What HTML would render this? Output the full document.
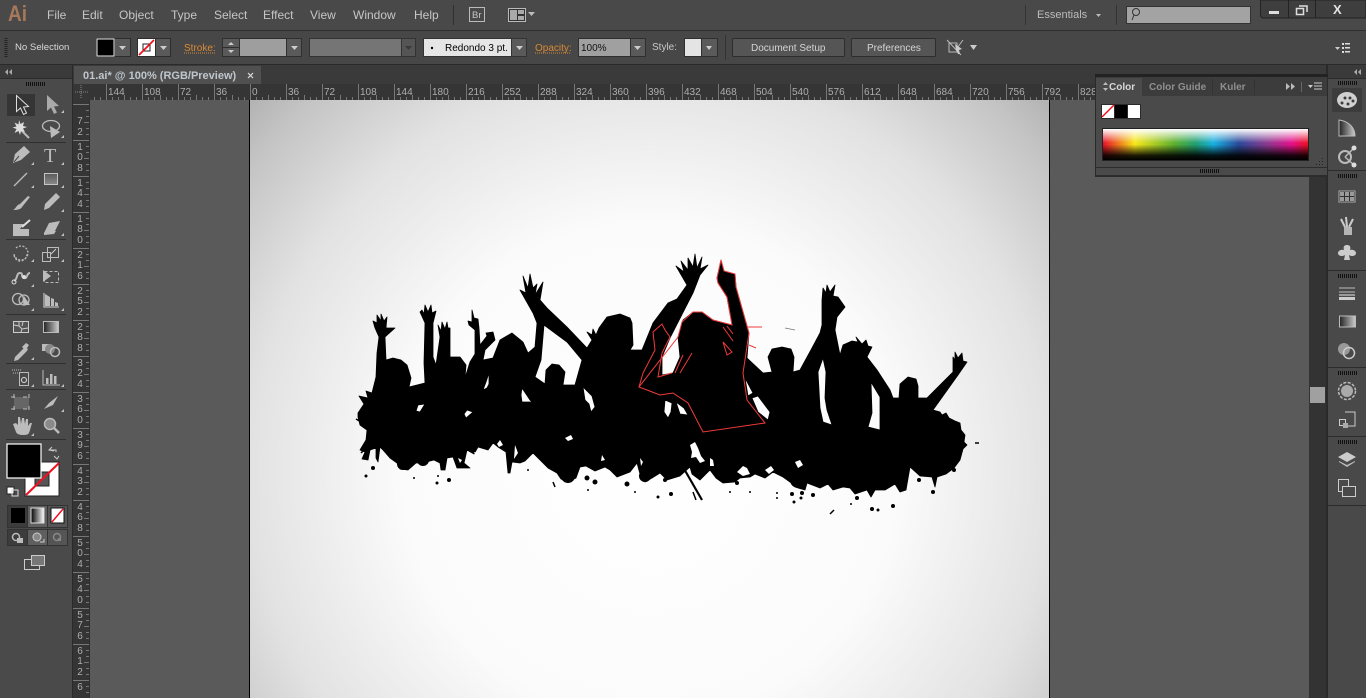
<!DOCTYPE html>
<html><head><meta charset="utf-8"><title>Illustrator</title>
<style>
html,body{margin:0;padding:0;background:#484848;overflow:hidden}
svg{display:block;font-family:"Liberation Sans",sans-serif}
.m{font-size:12px;fill:#c6c6c6}
.r{font-size:10px;fill:#aeaeae}
.v{font-size:10px;fill:#aeaeae;text-anchor:middle}
.o{font-size:10px;fill:#d98a35}
.i{fill:#bcbcbc}
.s{fill:none;stroke:#bcbcbc;stroke-width:1.3}
</style></head><body>
<svg width="1366" height="698" viewBox="0 0 1366 698" xmlns="http://www.w3.org/2000/svg">
<defs>
<radialGradient id="ab" gradientUnits="userSpaceOnUse" cx="650" cy="470" r="590">
<stop offset="0" stop-color="#fff"/><stop offset=".42" stop-color="#fbfbfb"/><stop offset=".68" stop-color="#e2e2e2"/><stop offset=".85" stop-color="#c4c4c4"/><stop offset="1" stop-color="#a0a0a0"/>
</radialGradient>
<linearGradient id="hue" x1="0" x2="1" y1="0" y2="0">
<stop offset="0" stop-color="#e8102a"/><stop offset=".07" stop-color="#f07020"/><stop offset=".155" stop-color="#f8e81a"/><stop offset=".35" stop-color="#5cb030"/><stop offset=".45" stop-color="#20a070"/><stop offset=".54" stop-color="#18b0e0"/><stop offset=".66" stop-color="#2a4a9c"/><stop offset=".8" stop-color="#8a3a90"/><stop offset=".92" stop-color="#e4108c"/><stop offset="1" stop-color="#ee1020"/>
</linearGradient>
<linearGradient id="ov" x1="0" x2="0" y1="0" y2="1">
<stop offset="0" stop-color="#fff"/><stop offset=".45" stop-color="#fff" stop-opacity="0"/><stop offset=".5" stop-color="#000" stop-opacity="0"/><stop offset=".85" stop-color="#000" stop-opacity=".88"/><stop offset="1" stop-color="#000"/>
</linearGradient>
<linearGradient id="g1" x1="0" x2="1"><stop offset="0" stop-color="#222"/><stop offset="1" stop-color="#ccc"/></linearGradient>
<linearGradient id="g2" x1="0" x2="1"><stop offset="0" stop-color="#000"/><stop offset="1" stop-color="#fff"/></linearGradient>
<linearGradient id="g3" x1="0" x2="0" y1="0" y2="1"><stop offset="0" stop-color="#5a5a5a"/><stop offset="1" stop-color="#8a8a8a"/></linearGradient>
<pattern id="hr" width="36" height="16" patternUnits="userSpaceOnUse" x="250" y="84">
<rect x="0" y="0" width="1" height="16" fill="#777"/>
<rect x="6" y="13" width="1" height="3" fill="#777"/><rect x="12" y="13" width="1" height="3" fill="#777"/><rect x="18" y="11" width="1" height="5" fill="#777"/><rect x="24" y="13" width="1" height="3" fill="#777"/><rect x="30" y="13" width="1" height="3" fill="#777"/>
</pattern>
<pattern id="vr" width="16" height="36" patternUnits="userSpaceOnUse" x="73" y="104">
<rect y="0" x="0" height="1" width="16" fill="#777"/>
<rect y="6" x="13" height="1" width="3" fill="#777"/><rect y="12" x="13" height="1" width="3" fill="#777"/><rect y="18" x="11" height="1" width="5" fill="#777"/><rect y="24" x="13" height="1" width="3" fill="#777"/><rect y="30" x="13" height="1" width="3" fill="#777"/>
</pattern>
<pattern id="grip" width="2" height="6" patternUnits="userSpaceOnUse"><rect width="1" height="6" fill="#111"/></pattern>
</defs>

<!-- base -->
<rect width="1366" height="698" fill="#484848"/>
<rect x="0" y="0" width="1366" height="30" fill="#494949"/>
<rect x="0" y="30" width="1366" height="1" fill="#2e2e2e"/>
<rect x="0" y="31" width="1366" height="33" fill="#474747"/>
<rect x="0" y="64" width="1366" height="1" fill="#2a2a2a"/>

<!-- menu -->
<text x="8" y="21" font-size="22" font-weight="bold" fill="#a8785a" textLength="19" lengthAdjust="spacingAndGlyphs">Ai</text>
<text class="m" x="47" y="19">File</text><text class="m" x="82" y="19">Edit</text><text class="m" x="119" y="19">Object</text><text class="m" x="171" y="19">Type</text><text class="m" x="214" y="19">Select</text><text class="m" x="263" y="19">Effect</text><text class="m" x="310" y="19">View</text><text class="m" x="353" y="19">Window</text><text class="m" x="414" y="19">Help</text>
<rect x="453" y="5" width="1" height="20" fill="#303030"/>
<rect x="469.500" y="7.500" width="15" height="14" fill="none" stroke="#bbb"/>
<text x="472" y="18" font-size="9.500" fill="#c8c8c8">Br</text>
<rect x="508.500" y="8.500" width="17" height="13" fill="#333" stroke="#bbb"/><rect x="510" y="10" width="7" height="10" fill="#aaa"/><rect x="518" y="10" width="6" height="4" fill="#aaa"/><rect x="518" y="16" width="6" height="4" fill="#aaa"/>
<path d="M528 12h7l-3.500 4z" fill="#bbb"/>
<rect x="1025" y="5" width="1" height="20" fill="#333"/>
<text x="1037" y="18" font-size="11" fill="#bcbcbc">Essentials</text>
<path d="M1096 14h5l-2.500 3z" fill="#bbb"/>
<rect x="1116" y="5" width="1" height="20" fill="#333"/>
<rect x="1126.500" y="6.500" width="124" height="17" fill="#a3a3a3" stroke="#333"/>
<circle cx="1136" cy="12" r="3.500" fill="none" stroke="#333"/><path d="M1134 15l-2 5" stroke="#333" fill="none"/>
<!-- window buttons -->
<path d="M1260.500 0v15a3 3 0 0 0 3 3h102.500V0z" fill="#3e3e3e" stroke="#222"/>
<rect x="1288" y="0" width="1" height="18" fill="#222"/><rect x="1315" y="0" width="1" height="18" fill="#222"/>
<rect x="1269" y="11" width="10" height="3" fill="#ddd"/>
<rect x="1296.500" y="8.500" width="7" height="6" fill="none" stroke="#ddd" stroke-width="1.500"/><path d="M1299 6h8v6" fill="none" stroke="#ddd" stroke-width="1.500"/>
<text x="1333" y="14" font-size="13" font-weight="bold" fill="#e2e2e2">X</text>

<!-- control bar -->
<path d="M6 38v20" stroke="#222" stroke-width="3" stroke-dasharray="1 1" fill="none"/>
<text x="15" y="50" font-size="9.600" fill="#d8d8d8">No Selection</text>
<rect x="96" y="38" width="35" height="19" fill="#2d2d2d"/>
<rect x="97" y="39" width="17" height="17" fill="#000" stroke="#eee"/>
<rect x="115" y="39" width="15" height="17" fill="#5a5a5a"/><path d="M119 46h7l-3.500 4z" fill="#ccc"/>
<rect x="137" y="38" width="34" height="19" fill="#2d2d2d"/>
<rect x="138" y="39" width="17" height="17" fill="#fff"/><rect x="143" y="44" width="7" height="7" fill="none" stroke="#222"/><path d="M139 55L154 40" stroke="#f01020" stroke-width="1.800"/>
<rect x="156" y="39" width="14" height="17" fill="#5a5a5a"/><path d="M160 46h7l-3.500 4z" fill="#ccc"/>
<text class="o" x="184" y="51">Stroke:</text><path d="M184 53h31" stroke="#d98a35" stroke-dasharray="1 1"/>
<rect x="222" y="38" width="80" height="19" fill="#2f2f2f"/>
<rect x="223" y="39" width="16" height="8" fill="#5a5a5a"/><rect x="223" y="48" width="16" height="8" fill="#5a5a5a"/>
<path d="M228 45l3-3 3 3zM228 50l3 3 3-3z" fill="#ccc"/>
<rect x="240" y="39" width="46" height="17" fill="#9e9e9e"/>
<rect x="287" y="39" width="14" height="17" fill="#5a5a5a"/><path d="M291 46h7l-3.500 4z" fill="#ccc"/>
<rect x="309" y="38" width="107" height="19" fill="#333"/>
<rect x="310" y="39" width="91" height="17" fill="#757575"/><rect x="402" y="39" width="13" height="17" fill="#555"/><path d="M405 46h7l-3.500 4z" fill="#3a3a3a"/>
<rect x="423" y="38" width="104" height="19" fill="#333"/>
<rect x="424" y="39" width="87" height="17" fill="#e6e6e6"/>
<circle cx="432" cy="48" r="1.200" fill="#000"/>
<text x="445" y="51" font-size="10" fill="#000">Redondo 3 pt.</text>
<rect x="512" y="39" width="14" height="17" fill="#5a5a5a"/><path d="M516 46h7l-3.500 4z" fill="#ccc"/>
<text class="o" x="535" y="51">Opacity:</text><path d="M535 53h36" stroke="#d98a35" stroke-dasharray="1 1"/>
<rect x="578" y="38" width="68" height="19" fill="#2f2f2f"/>
<rect x="579" y="39" width="51" height="17" fill="#a0a0a0"/><text x="581" y="51" font-size="10" fill="#111">100%</text>
<rect x="631" y="39" width="14" height="17" fill="#5a5a5a"/><path d="M634 46h7l-3.500 4z" fill="#ccc"/>
<text x="652" y="50" font-size="10" fill="#c8c8c8">Style:</text>
<rect x="684" y="38" width="34" height="19" fill="#2f2f2f"/>
<rect x="685" y="39" width="16" height="17" fill="#e4e4e4"/><rect x="702" y="39" width="15" height="17" fill="#5a5a5a"/><path d="M706 46h6l-3 4z" fill="#ccc"/>
<rect x="725" y="35" width="1" height="25" fill="#333"/>
<rect x="732.500" y="38.500" width="112" height="18" rx="1" fill="#555" stroke="#2d2d2d"/>
<text x="751" y="51" font-size="10" fill="#d4d4d4">Document Setup</text>
<rect x="851.500" y="38.500" width="84" height="18" rx="1" fill="#555" stroke="#2d2d2d"/>
<text x="867" y="51" font-size="10" fill="#d4d4d4">Preferences</text>
<rect x="949" y="43" width="8" height="9" fill="none" stroke="#bbb"/><path d="M947 40l14 15M963 40l-6 8" stroke="#bbb" fill="none"/><path d="M955 44l7 5-3 1 1 4-2 0-2-4z" fill="#ccc"/>
<path d="M970 45h7l-3.500 5z" fill="#ccc"/>
<path d="M1335 47h5l-2.500 3z" fill="#ccc"/><path d="M1342 43h2v2h-2zM1345 43h5v1.500h-5zM1342 47h2v2h-2zM1345 47h5v1.500h-5zM1342 51h2v2h-2zM1345 51h5v1.500h-5z" fill="#ddd"/>

<!-- doc area -->
<rect x="73" y="65" width="1255" height="19" fill="#3a3a3a"/>
<rect x="74" y="66" width="187" height="18" fill="#505050"/>
<text x="83" y="79" font-size="11" font-weight="bold" fill="#bfc6cc">01.ai* @ 100% (RGB/Preview)</text>
<path d="M248 73l5 5M253 73l-5 5" stroke="#ddd" stroke-width="1.200"/>
<rect x="89" y="100" width="1221" height="598" fill="#5a5a5a"/>
<!-- ruler h -->
<rect x="73" y="84" width="1254" height="16" fill="#353535"/>
<rect x="90" y="84" width="1005" height="16" fill="url(#hr)"/>
<rect x="73" y="84" width="16" height="16" fill="#363636"/>
<path d="M75 92h14M81 85v14" stroke="#888" stroke-dasharray="1 1" fill="none"/>
<g><text class="r" x="108" y="95">144</text><text class="r" x="144" y="95">108</text><text class="r" x="180" y="95">72</text><text class="r" x="216" y="95">36</text><text class="r" x="252" y="95">0</text><text class="r" x="288" y="95">36</text><text class="r" x="324" y="95">72</text><text class="r" x="360" y="95">108</text><text class="r" x="396" y="95">144</text><text class="r" x="432" y="95">180</text><text class="r" x="468" y="95">216</text><text class="r" x="504" y="95">252</text><text class="r" x="540" y="95">288</text><text class="r" x="576" y="95">324</text><text class="r" x="612" y="95">360</text><text class="r" x="648" y="95">396</text><text class="r" x="684" y="95">432</text><text class="r" x="720" y="95">468</text><text class="r" x="756" y="95">504</text><text class="r" x="792" y="95">540</text><text class="r" x="828" y="95">576</text><text class="r" x="864" y="95">612</text><text class="r" x="900" y="95">648</text><text class="r" x="936" y="95">684</text><text class="r" x="972" y="95">720</text><text class="r" x="1008" y="95">756</text><text class="r" x="1044" y="95">792</text><text class="r" x="1080" y="95">828</text></g>
<!-- ruler v -->
<rect x="73" y="100" width="16" height="598" fill="#353535"/>
<rect x="73" y="104" width="16" height="594" fill="url(#vr)"/>
<rect x="89" y="100" width="1" height="598" fill="#2e2e2e"/>
<g>
<text class="v" x="80" y="124">7</text><text class="v" x="80" y="135">2</text>
<text class="v" x="80" y="150">1</text><text class="v" x="80" y="160">0</text><text class="v" x="80" y="171">8</text>
<text class="v" x="80" y="186">1</text><text class="v" x="80" y="196">4</text><text class="v" x="80" y="207">4</text>
<text class="v" x="80" y="222">1</text><text class="v" x="80" y="232">8</text><text class="v" x="80" y="243">0</text>
<text class="v" x="80" y="258">2</text><text class="v" x="80" y="268">1</text><text class="v" x="80" y="279">6</text>
<text class="v" x="80" y="294">2</text><text class="v" x="80" y="304">5</text><text class="v" x="80" y="315">2</text>
<text class="v" x="80" y="330">2</text><text class="v" x="80" y="340">8</text><text class="v" x="80" y="351">8</text>
<text class="v" x="80" y="366">3</text><text class="v" x="80" y="376">2</text><text class="v" x="80" y="387">4</text>
<text class="v" x="80" y="402">3</text><text class="v" x="80" y="412">6</text><text class="v" x="80" y="423">0</text>
<text class="v" x="80" y="438">3</text><text class="v" x="80" y="448">9</text><text class="v" x="80" y="459">6</text>
<text class="v" x="80" y="474">4</text><text class="v" x="80" y="484">3</text><text class="v" x="80" y="495">2</text>
<text class="v" x="80" y="510">4</text><text class="v" x="80" y="520">6</text><text class="v" x="80" y="531">8</text>
<text class="v" x="80" y="546">5</text><text class="v" x="80" y="556">0</text><text class="v" x="80" y="567">4</text>
<text class="v" x="80" y="582">5</text><text class="v" x="80" y="592">4</text><text class="v" x="80" y="603">0</text>
<text class="v" x="80" y="618">5</text><text class="v" x="80" y="628">7</text><text class="v" x="80" y="639">6</text>
<text class="v" x="80" y="654">6</text><text class="v" x="80" y="664">1</text><text class="v" x="80" y="675">2</text>
<text class="v" x="80" y="690">6</text>
</g>
<!-- artboard -->
<rect x="250" y="100" width="799" height="598" fill="url(#ab)"/>
<rect x="249" y="100" width="1" height="598" fill="#000"/><rect x="1049" y="100" width="1" height="598" fill="#000"/>

<!-- silhouette -->
<path fill="#000" stroke="#000" stroke-width=".8" stroke-linejoin="round" fill-rule="evenodd" d="M358 413L364 404 359 396 368 398 366 391 372 393 376 377 377 353 379 337 375 328 373 321 377 323 377 315 381 321 381 314 384 321 387 317 386 328 395 328 385 337 386 360 393 358 401 360 407 365 411 378 409 387 425 383 424 363 425 323 420 312 422 310 424 314 425 305 428 312 431 305 432 313 436 311 433 323 433 357 436 365 440 337 438 325 441 331 442 322 445 329 447 322 448 328 450 328 450 357 460 357 466 365 465 378 470 362 475 354 475 330 469 325 468 321 472 322 472 310 474 318 478 319 479 328 480 345 487 336 486 333 493 332 495 340 485 350 483 360 493 358 500 340 512 333 523 342 528 353 535 347 537 323 533 313 520 290 526 293 523 276 528 288 530 274 533 288 537 284 535 295 543 282 540 300 547 308 567 327 587 348 592 340 587 332 592 335 593 329 596 335 599 328 607 317 620 314 630 318 632 323 633 345 630 350 642 350 653 323 668 303 677 299 687 285 676 266 684 272 681 261 688 270 688 258 693 267 695 254 697 268 702 257 700 269 708 265 700 275 693 293 670 338 662 357 662 375 673 373 680 357 678 337 683 320 693 312 702 312 713 320 732 325 727 297 718 283 717 278 721 260 724 271 735 274 736 287 749 333 747 358 763 373 772 372 768 357 772 349 782 347 791 349 794 357 793 372 800 370 812 348 820 333 822 325 822 300 823 288 826 293 827 285 830 292 835 285 833 296 838 297 845 307 837 317 835 330 840 355 843 345 852 341 858 342 856 337 862 344 866 340 868 346 872 347 867 357 877 370 890 390 893 398 899 398 900 384 908 377 916 379 918 386 918 398 927 398 953 372 953 357 955 360 955 352 958 358 962 353 963 361 967 362 958 375 933 410 940 412 942 415 946 413 949 418 955 421 960 423 961 430 965 435 964 442 967 445 963 449 960 460 954 468 946 474 937 477 935 487 932 477 920 476 910 467 906 490 900 492 895 484 885 490 875 490 871 497 867 490 855 494 850 488 843 487 833 490 828 484 820 488 807 483 805 490 798 488 790 482 783 477 773 472 765 478 755 474 750 477 740 478 735 482 723 483 716 478 710 470 704 476 700 480 692 474 690 467 680 476 667 480 660 473 652 478 645 482 640 474 637 463 630 472 617 477 610 470 605 467 595 471 586 466 580 467 576 478 568 482 561 479 557 473 548 468 540 460 533 453 525 461 520 463 512 462 510 473 508 473 506 452 498 447 493 443 488 450 478 447 474 454 467 450 464 463 470 468 457 468 453 457 447 458 445 470 441 470 440 463 434 460 430 461 423 463 416 463 408 470 400 469 397 463 390 458 383 450 380 447 378 462 376 458 376 448 370 450 368 460 362 459 365 452 360 450 366 440 367 430 360 425 358 417Z
M544 325L567 342 582 360 575 385 563 385 565 372 559 365 552 364 546 370 545 384 535 377 541 360Z
M489 373L486 382 483 390 487 388 489 384Z
M522 388L530 400 532 402 522 402 521 395Z
M583 387L592 396 595 407 591 412 589 404 585 400Z
M745 378L753 393 748 396Z
M752 398L758 396 770 412 768 420 758 412Z
M823 358L826 372 825 398 827 410 832 425 823 422 820 408 818 372Z
M871 382L880 397 880 430 868 427 872 413Z
M418 405L425 404 420 412 416 411Z
M467 410L473 412 466 418 464 414Z
M665 400L672 403 671 412 668 418 664 412Z
M676 402L684 408 688 415 680 414Z
"/>
<!-- white specks in splatter -->
<path fill="#fff" d="M690 445l5-3 3 6 3 8 4 5-5 2-4-6-5 1 1-6zM737 472l6-6 4 2 3 6-7 2zM765 470l6-4 3 4-5 4zM795 462l5-2 3 5-5 3zM710 458l3 2 1 6-4 0zM565 438l6-3 2 4-5 2zM500 440l3 5-4 2-2-3zM474 452l5 1-2 5zM515 445l3 8-4 6zM458 458l4 2-2 3zM602 455l3 5-4 1zM640 458l3 4-2 4z"/>
<!-- streaks & dots -->
<path d="M683 467L702 500" stroke="#000" stroke-width="2.200"/><path d="M693 492l3 8M553 482l2 5M363 423l-7-4M369 445l-8 8M830 514l4-4M975 443h4M510 463l-1 10" stroke="#000" stroke-width="1.500"/>
<g fill="#000"><circle cx="366" cy="476" r="1.500"/><circle cx="373" cy="468" r="2"/><circle cx="414" cy="478" r="1"/><circle cx="437" cy="483" r="1.500"/><circle cx="438" cy="476" r="1"/><circle cx="449" cy="480" r="2"/><circle cx="403" cy="464" r="6"/><circle cx="423" cy="460" r="6"/><circle cx="528" cy="470" r="1"/><circle cx="587" cy="478" r="2.500"/><circle cx="595" cy="482" r="2.500"/><circle cx="588" cy="490" r="1"/><circle cx="627" cy="484" r="2.500"/><circle cx="635" cy="492" r="1"/><circle cx="658" cy="497" r="1.500"/><circle cx="665" cy="480" r="2"/><circle cx="671" cy="494" r="2"/><circle cx="737" cy="483" r="2"/><circle cx="730" cy="492" r="1"/><circle cx="750" cy="492" r="1"/><circle cx="777" cy="493" r="1"/><circle cx="777" cy="498" r="1"/><circle cx="792" cy="494" r="2"/><circle cx="802" cy="493" r="2"/><circle cx="801" cy="498" r="1.500"/><circle cx="813" cy="495" r="2"/><circle cx="794" cy="502" r="1.500"/><circle cx="798" cy="480" r="8"/><circle cx="783" cy="468" r="8"/><circle cx="857" cy="498" r="2"/><circle cx="872" cy="509" r="2"/><circle cx="878" cy="510" r="1.500"/><circle cx="893" cy="506" r="2"/><circle cx="851" cy="504" r="1"/><circle cx="919" cy="480" r="2"/><circle cx="933" cy="492" r="2"/><circle cx="954" cy="470" r="2"/><circle cx="568" cy="476" r="7"/><circle cx="645" cy="476" r="6"/></g>
<!-- red outline -->
<path fill="none" stroke="#f23a3a" stroke-width="1" d="M639 387L643 373 655 350 653 332 662 324 665 330 670 337 662 353 658 377 672 373 M678 337L682 322 693 312 702 312 713 320 732 325 727 297 718 283 717 278 721 260 724 271 735 274 736 287 749 333 743 373 747 400 765 423 703 432 688 403 673 393 660 395 647 390 639 387Z"/>
<path fill="none" stroke="#f23a3a" stroke-width="1" d="M747 327h15M749 345l7 3M723 342l9 10-5 3zM723 327l10 14M727 326l6 8M683 355l-8 18M692 353l-12 20"/>
<path d="M785 328l10 2" stroke="#777" stroke-width=".8"/>

<!-- scrollbar -->
<rect x="1309" y="100" width="18" height="598" fill="#333"/>
<rect x="1310" y="387" width="15" height="16" fill="#a0a0a0"/>
<rect x="1326" y="65" width="2" height="633" fill="#2a2a2a"/>

<!-- left panel -->
<rect x="0" y="65" width="72" height="14" fill="#3a3a3a"/>
<rect x="72" y="65" width="1" height="633" fill="#2a2a2a"/>
<path d="M8 69l-3 3 3 3zM12 69l-3 3 3 3z" fill="#aaa"/>
<rect x="0" y="78" width="72" height="620" fill="#4a4a4a"/>
<rect x="0" y="78" width="72" height="1" fill="#2c2c2c"/>
<rect x="25" y="82" width="20" height="4" fill="url(#grip)"/>
<rect x="7" y="94" width="28" height="22" fill="#353535"/>
<!-- separators -->
<g fill="#303030"><rect x="6" y="142" width="60" height="1"/><rect x="6" y="239" width="60" height="1"/><rect x="6" y="314" width="60" height="1"/><rect x="6" y="363" width="60" height="1"/><rect x="6" y="389" width="60" height="1"/><rect x="6" y="439" width="60" height="1"/></g>
<!-- corner marks -->
<path d="M64 113l-3 0 3-3zM64 138l-3 0 3-3zM34 165l-3 0 3-3zM64 165l-3 0 3-3zM34 188l-3 0 3-3zM64 188l-3 0 3-3zM64 212l-3 0 3-3zM64 236l-3 0 3-3zM34 262l-3 0 3-3zM64 262l-3 0 3-3zM34 287l-3 0 3-3zM34 311l-3 0 3-3zM64 311l-3 0 3-3zM34 360l-3 0 3-3zM34 387l-3 0 3-3zM64 387l-3 0 3-3zM64 412l-3 0 3-3zM34 436l-3 0 3-3z" fill="#c0c0c0"/>
<!-- row 1 -->
<path d="M16.500 95.500v16l4-3.500 3 6.500 3-1.500-3-6 5-.5z" fill="#333" stroke="#ddd"/>
<path d="M47 95v16l4-3.500 3 6.500 3-1.500-3-6 5-.5z" fill="#aaa"/>
<!-- wand / lasso -->
<path d="M21 130l8 8" stroke="#bbb" stroke-width="2"/><path d="M19 120l1.500 4 3.500-2-1 4 4 1-4 1.500 2 3.500-4-1-1 4-1.500-4-4 2 2-4-4-1.500 4-1-2-4 4 2z" fill="#ddd"/>
<ellipse cx="51" cy="126" rx="8.500" ry="5.500" class="s"/><path d="M50 126l1 12 9-6z" fill="#bbb"/>
<!-- pen / T -->
<path d="M13 163l2-9 9-8 6 6-9 8z" class="i"/><path d="M14 162l5-6" stroke="#444"/>
<text x="44" y="162" font-family="Liberation Serif,serif" font-size="20" fill="#bcbcbc">T</text>
<!-- line / rect -->
<path d="M14 186L27 173" stroke="#bbb" stroke-width="1.300"/>
<rect x="44.500" y="173.500" width="13" height="11" fill="url(#g3)" stroke="#c4c4c4"/>
<!-- brush / pencil -->
<path d="M28 196l2 1-8 10c-1 2-4 3-9 3 3-1 3-5 7-6z" class="i"/>
<path d="M44 210l1-6 11-11 4 4-11 11z" class="i"/>
<!-- blob / eraser -->
<path d="M13 224h11l-4 5h9v7H13z" class="i"/><path d="M22 227l8-7" stroke="#ddd" stroke-width="2"/>
<path d="M44 233l5-10 11-2-5 10 1 0-2 3-10 1z" class="i"/>
<!-- rotate / scale -->
<path d="M16 248a7 7 0 1 1-2 6a7 7 0 0 0 5 7a7 7 0 0 0 8-7" fill="none" stroke="#bbb" stroke-dasharray="2 1.500" stroke-width="1.300"/>
<rect x="42.500" y="252.500" width="8" height="9" fill="none" stroke="#bbb"/><rect x="47.500" y="247.500" width="11" height="10" fill="none" stroke="#bbb"/><path d="M51 254l5-5" stroke="#ccc"/>
<!-- warp / free transform -->
<path d="M14 281c4-2 2-8 6-8s0 4 4 5 2-5 6-5" fill="none" stroke="#bbb" stroke-width="2"/><circle cx="14" cy="282" r="2" fill="none" stroke="#ddd"/><circle cx="24" cy="277" r="2" fill="#ddd"/>
<rect x="44.500" y="271.500" width="14" height="11" fill="none" stroke="#bbb" stroke-dasharray="3 2"/><path d="M43 270l8 6-8 6z" fill="#bbb"/>
<!-- shape builder / chart -->
<circle cx="18" cy="299" r="5.500" class="s"/><circle cx="24" cy="300" r="5" class="s"/><path d="M24 296l6 9-7 0z" class="i"/>
<path d="M44 293v14h15" fill="none" stroke="#bbb" stroke-width="1.300"/><path d="M45 294l5 3v9h-5zM51 298l3 1v7h-3zM55 302l3 1v3h-3z" class="i"/>
<!-- mesh / gradient -->
<rect x="13.500" y="321.500" width="15" height="11" fill="#555" stroke="#ccc"/><path d="M14 325l5 1 3 3 6-1M19 322v4M22 329l-1 3M23 322l-1 4" stroke="#ccc" fill="none"/>
<rect x="43.500" y="321.500" width="15" height="11" fill="url(#g1)" stroke="#bbb"/>
<!-- eyedropper / blend -->
<path d="M15 357l9-9 3 3-9 9-4 1z" class="i"/><path d="M23 346l3-3 3 2-2 3 1 2-2 1-4-4z" class="i"/>
<rect x="42" y="344" width="8" height="7" class="i"/><circle cx="50" cy="349" r="5" fill="#888"/><circle cx="55" cy="352" r="4.500" fill="none" stroke="#bbb" stroke-width="1.500"/>
<!-- symbol spray / graph -->
<rect x="19.500" y="372.500" width="9" height="13" fill="none" stroke="#bbb"/><circle cx="24" cy="380" r="2.500" fill="none" stroke="#ddd"/><path d="M12 370h10M13 373h7" stroke="#bbb" stroke-dasharray="1 1"/>
<path d="M43 370v15h17" fill="none" stroke="#bbb"/><path d="M46 378h2.500v6H46zM50 374h2.500v10H50zM54 376h2.500v8H54z" class="i"/>
<!-- artboard / slice -->
<rect x="14" y="397" width="15" height="12" fill="#666"/><path d="M11 397h18M11 409h21M14 394v18M29 394v18" stroke="#bbb" stroke-dasharray="4 8" fill="none"/>
<path d="M44 409l5-6 9-7-5 9z" class="i"/>
<!-- hand / zoom -->
<path d="M13 424l3 8c1 2 3 3 8 3s5-2 6-5l2-7-2 0-2 3 0-7-2 0-1 5-1-6-2 0-1 6-1-7-2 0v8l-2-2z" class="i"/>
<circle cx="50" cy="424" r="5.500" fill="#8a8a8a" stroke="#bbb" stroke-width="1.500"/><path d="M54 428l5 5" stroke="#bbb" stroke-width="2.500"/>
<!-- colors -->
<path d="M54 451l-5-1 3-3M49 450h7v2M54 456l3 3 2-3" fill="none" stroke="#ccc"/>
<rect x="25" y="462" width="34" height="34" fill="#fff" stroke="#222"/><rect x="35" y="472" width="14" height="14" fill="#555" stroke="#222"/>
<path d="M26 495L59 463" stroke="#f01020" stroke-width="2"/>
<rect x="7" y="444" width="34" height="34" fill="#000" stroke="#fff" stroke-width="1.200"/>
<rect x="7" y="487" width="7" height="7" fill="#fff" stroke="#222"/><rect x="12" y="490" width="6" height="6" fill="none" stroke="#ddd"/>
<!-- colour modes -->
<rect x="7" y="505" width="61" height="23" fill="#333"/>
<rect x="8" y="506" width="19" height="21" fill="#3c3c3c"/><rect x="11" y="508" width="14" height="15" fill="#000"/>
<rect x="28" y="506" width="19" height="21" fill="#5f5f5f"/><rect x="31" y="508" width="13" height="15" fill="url(#g2)" stroke="#ddd"/>
<rect x="48" y="506" width="19" height="21" fill="#555"/><rect x="51" y="508" width="13" height="15" fill="#fff" stroke="#111"/><path d="M52 522l11-13" stroke="#f01020" stroke-width="1.500"/>
<rect x="7" y="529" width="61" height="17" fill="#333"/>
<rect x="8" y="530" width="19" height="15" fill="#3c3c3c"/><circle cx="16" cy="537" r="3.500" fill="none" stroke="#bbb" stroke-width="1.500"/><rect x="17" y="538" width="6" height="5" fill="#bbb"/>
<rect x="28" y="530" width="19" height="15" fill="#5f5f5f"/><circle cx="37" cy="537" r="4" fill="#888" stroke="#ccc"/><path d="M40 542h4v-3" stroke="#ccc" fill="none"/>
<rect x="48" y="530" width="19" height="15" fill="#555"/><circle cx="57" cy="537" r="3.500" fill="none" stroke="#888" stroke-width="1.500"/><rect x="58" y="538" width="3" height="3" fill="#888"/>
<rect x="24.500" y="559.500" width="15" height="10" fill="#484848" stroke="#ccc"/><rect x="31.500" y="555.500" width="13" height="10" fill="#777" stroke="#ccc"/>

<!-- colour panel -->
<rect x="1095" y="74" width="233" height="3" fill="#222"/>
<rect x="1095" y="77" width="232" height="100" fill="#4a4a4a"/>
<rect x="1095" y="77" width="232" height="19" fill="#3c3c3c"/>
<rect x="1096" y="78" width="46" height="18" fill="#4a4a4a"/>
<rect x="1095" y="77" width="1" height="100" fill="#2a2a2a"/>
<path d="M1103 85l2.500-3 2.500 3zM1103 88l2.500 3 2.500-3z" fill="#bbb"/>
<text x="1109" y="90" font-size="10" font-weight="bold" fill="#d8d8d8">Color</text>
<text x="1149" y="90" font-size="10" font-weight="bold" fill="#8f8f8f">Color Guide</text>
<rect x="1212" y="79" width="1" height="16" fill="#333"/>
<text x="1220" y="90" font-size="10" font-weight="bold" fill="#8f8f8f">Kuler</text>
<rect x="1254" y="79" width="1" height="16" fill="#333"/>
<path d="M1286 83l4 3.500-4 3.500zM1291 83l4 3.500-4 3.500z" fill="#bbb"/>
<rect x="1301" y="82" width="1" height="10" fill="#666"/>
<path d="M1308 85h5l-2.500 3z" fill="#ccc"/><path d="M1314 83h8M1314 86h8M1314 89h8" stroke="#ccc"/>
<rect x="1101" y="104" width="40" height="15" fill="#2a2a2a"/>
<rect x="1102" y="105" width="12" height="13" fill="#fff"/><path d="M1102 117l12-12" stroke="#f01020" stroke-width="1.500"/>
<rect x="1115" y="105" width="12" height="13" fill="#000"/><rect x="1128" y="105" width="12" height="13" fill="#fff"/>
<rect x="1102" y="128" width="207" height="33" fill="#222"/>
<rect x="1103" y="129" width="205" height="31" fill="url(#hue)"/>
<rect x="1103" y="129" width="205" height="31" fill="url(#ov)"/>
<path d="M1316 164h1v1h-1zM1319 161h1v1h-1zM1319 164h1v1h-1zM1322 158h1v1h-1zM1322 161h1v1h-1zM1322 164h1v1h-1z" fill="#222"/>
<rect x="1095" y="167" width="232" height="1" fill="#2c2c2c"/>
<rect x="1095" y="175" width="232" height="2" fill="#2c2c2c"/>
<rect x="1200" y="169" width="20" height="4" fill="url(#grip)"/>

<!-- right dock -->
<rect x="1328" y="65" width="38" height="633" fill="#494949"/>
<rect x="1328" y="65" width="38" height="13" fill="#3a3a3a"/>
<rect x="1328" y="78" width="38" height="1" fill="#2c2c2c"/>
<path d="M1357 69l-3 3 3 3zM1361 69l-3 3 3 3z" fill="#aaa"/>
<rect x="1337" y="81" width="20" height="4" fill="url(#grip)"/>
<rect x="1337" y="174" width="20" height="4" fill="url(#grip)"/><rect x="1337" y="274" width="20" height="4" fill="url(#grip)"/><rect x="1337" y="371" width="20" height="4" fill="url(#grip)"/><rect x="1337" y="440" width="20" height="4" fill="url(#grip)"/>
<g fill="#2c2c2c"><rect x="1328" y="170" width="38" height="1"/><rect x="1328" y="270" width="38" height="1"/><rect x="1328" y="367" width="38" height="1"/><rect x="1328" y="436" width="38" height="1"/><rect x="1328" y="505" width="38" height="1"/></g>
<rect x="1332" y="88" width="30" height="24" rx="2" fill="#3c3c3c"/>
<ellipse cx="1347" cy="100" rx="10" ry="8" fill="#d0d0d0"/><g fill="#3c3c3c"><circle cx="1342" cy="103" r="1.500"/><circle cx="1345" cy="98" r="1.500"/><circle cx="1350" cy="98" r="1.500"/><circle cx="1353" cy="101" r="1.500"/><circle cx="1348" cy="104" r="1.500"/></g>
<path d="M1339 120v16h16c0-9-7-15-16-16z" fill="url(#g1)" stroke="#bbb"/>
<circle cx="1345" cy="157" r="6" fill="none" stroke="#bbb" stroke-width="2"/><path d="M1345 157l9-9M1345 157l9 8" stroke="#bbb" stroke-width="1.500"/><circle cx="1354" cy="148" r="2.500" fill="#ddd"/><circle cx="1354" cy="165" r="2.500" fill="#ddd"/>
<rect x="1339" y="191" width="16" height="11" fill="#2f2f2f" stroke="#aaa"/><path d="M1340 192h4v4h-4zM1345 192h4v4h-4zM1350 192h4v4h-4zM1340 197h4v4h-4zM1345 197h4v4h-4zM1350 197h4v4h-4z" fill="#9a9a9a"/>
<rect x="1344" y="227" width="8" height="8" fill="#b5b5b5"/><path d="M1347 227l-1-10M1349 227l4-8M1345 227l-4-8" stroke="#ccc" stroke-width="2"/>
<path d="M1347 245c3 0 4 2 3 5 3-1 6 1 6 3 0 3-4 4-7 2l1 5h-6l1-5c-3 2-7 1-7-2 0-2 3-4 6-3-1-3 0-5 3-5z" fill="#ccc"/>
<path d="M1339 288h16M1339 292h16" stroke="#bbb"/><rect x="1339" y="294" width="16" height="2" fill="#999"/><rect x="1339" y="297" width="16" height="3" fill="#ccc"/>
<rect x="1339.500" y="316" width="16" height="11" fill="url(#g1)" stroke="#bbb"/>
<circle cx="1344" cy="349" r="6" fill="#999"/><circle cx="1349" cy="353" r="5.500" fill="none" stroke="#ccc" stroke-width="1.500"/>
<circle cx="1347" cy="391" r="6" fill="#aaa"/><circle cx="1347" cy="391" r="8.500" fill="none" stroke="#bbb" stroke-width="1.500" stroke-dasharray="3 1.500"/>
<path d="M1345 412h10v14h-7" fill="none" stroke="#ccc"/><rect x="1339.500" y="419.500" width="6" height="6" fill="none" stroke="#ccc"/><rect x="1343" y="423" width="5" height="5" fill="#aaa"/>
<path d="M1347 452l9 5-9 5-9-5z" fill="#ccc"/><path d="M1339 461l8 4 8-4v1l-8 5-8-5z" fill="#bbb"/>
<rect x="1338.500" y="479.500" width="10" height="12" fill="none" stroke="#ccc"/><rect x="1342.500" y="486.500" width="13" height="10" fill="#494949" stroke="#ccc"/>
</svg>
</body></html>
